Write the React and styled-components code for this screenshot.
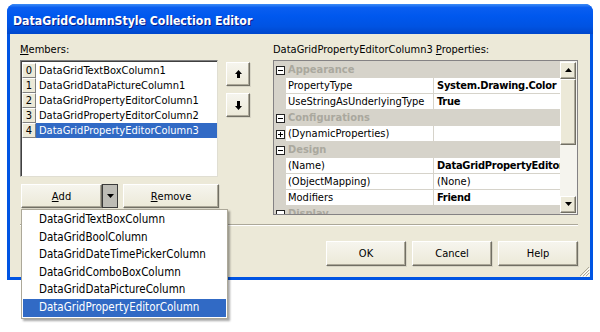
import React from "react";
import styled, { createGlobalStyle } from "styled-components";

const Global = createGlobalStyle`
  html, body { margin: 0; padding: 0; background: #ffffff; }
  body { font-family: "DejaVu Sans Condensed", "DejaVu Sans", sans-serif; font-size: 11px; color: #000; }
  * { box-sizing: border-box; }
`;

const Screen = styled.div`
  width: 600px;
  height: 332px;
  padding: 4px 0 0 7px;
  position: relative;
  overflow: hidden;
`;

const Window = styled.div`
  width: 586px;
  height: 276px;
  background: #0054e3;
  border-radius: 8px 8px 0 0;
  padding: 0 3px 3px 3px;
  display: flex;
  flex-direction: column;
  position: relative;
`;

const TitleBar = styled.div`
  height: 30px;
  margin: 0 -3px;
  border-radius: 8px 8px 0 0;
  background: linear-gradient(to bottom, #3d8cf5 0%, #0a5ef0 12%, #0058ee 40%, #0053e2 75%, #0047cc 100%);
  display: flex;
  align-items: center;
  padding: 3px 0 0 6px;
  color: #fff;
  font-family: "DejaVu Sans Condensed", "DejaVu Sans", sans-serif;
  font-weight: bold;
  font-size: 12.2px;
  text-shadow: 1px 1px 0 #0a1e8a;
`;

const Body = styled.div`
  flex: 1;
  background: #ece9d8;
  padding: 9px 12px 0 10px;
  display: flex;
  flex-direction: column;
  position: relative;
`;

const Top = styled.div`
  display: flex;
  gap: 23px;
`;

const LeftCol = styled.div`
  width: 230px;
  display: flex;
  flex-direction: column;
`;

const RightCol = styled.div`
  width: 305px;
  display: flex;
  flex-direction: column;
`;

const Label = styled.div`
  height: 14px;
  line-height: 14px;
  margin-bottom: 3px;
  u { text-decoration: underline; }
`;

const ListRow = styled.div`
  display: flex;
  gap: 8px;
`;

const ListBox = styled.div`
  width: 198px;
  height: 117px;
  background: #fff;
  border-top: 1px solid #7f7f7f;
  border-left: 1px solid #7f7f7f;
  border-right: 1px solid #e0ded2;
  border-bottom: 1px solid #e0ded2;
  box-shadow: inset 1px 1px 0 #404040;
  padding: 2px 0 0 1px;
`;

const Item = styled.div`
  display: flex;
  height: 15px;
  line-height: 15px;
`;

const IndexCell = styled.div`
  width: 14px;
  flex: none;
  background: #ece9d8;
  border-top: 1px solid #fff;
  border-left: 1px solid #fff;
  border-right: 1px solid #808080;
  border-bottom: 1px solid #808080;
  text-align: center;
  line-height: 13px;
`;

const ItemText = styled.div`
  flex: 1;
  padding-left: 3px;
  background: ${(p) => (p.$sel ? "#316ac5" : "transparent")};
  color: ${(p) => (p.$sel ? "#fff" : "#000")};
`;

const ArrowCol = styled.div`
  display: flex;
  flex-direction: column;
  gap: 7px;
  padding-top: 2px;
`;

const BevelButton = styled.button`
  font: inherit;
  color: #000;
  background: linear-gradient(to bottom, #f6f5ee, #ece9d8);
  border-top: 1px solid #fff;
  border-left: 1px solid #fff;
  border-right: 1px solid #716f64;
  border-bottom: 1px solid #716f64;
  box-shadow: inset -1px -1px 0 #aca899, 1px 1px 0 #d8d5c6;
  padding: 0;
  display: flex;
  align-items: center;
  justify-content: center;
  width: ${(p) => p.$w || 24}px;
  height: ${(p) => p.$h || 24}px;
  u { text-decoration: underline; }
`;

const ButtonsRow = styled.div`
  margin-top: 7px;
  display: flex;
  position: relative;
  padding-left: 1px;
`;

const SplitArrow = styled.div`
  width: 16px;
  height: 24px;
  background: #bdbcb5;
  border: 1px solid #3a3a3a;
  display: flex;
  align-items: center;
  justify-content: center;
  margin-right: 5px;
`;

const Menu = styled.div`
  position: absolute;
  left: 1px;
  top: 25px;
  width: 207px;
  background: #fff;
  border: 1px solid #aca899;
  padding: 1px;
  box-shadow: 2px 2px 2px rgba(0, 0, 0, 0.35);
  z-index: 5;
`;

const MenuItem = styled.div`
  height: 17.6px;
  line-height: 17.6px;
  padding-left: 16px;
  font-size: 11.5px;
  background: ${(p) => (p.$sel ? "#316ac5" : "transparent")};
  color: ${(p) => (p.$sel ? "#fff" : "#000")};
`;

const Grid = styled.div`
  width: 305px;
  height: 155px;
  border: 1px solid #848284;
  display: flex;
  background: #d6d3ca;
`;

const GridRows = styled.div`
  flex: 1;
  overflow: hidden;
  padding-top: 1px;
`;

const GRow = styled.div`
  display: flex;
  height: 16px;
  line-height: 15px;
`;

const Gutter = styled.div`
  width: 12px;
  flex: none;
  display: flex;
  align-items: center;
  justify-content: center;
  padding-left: 1px;
`;

const CatName = styled.div`
  flex: 1;
  padding-left: 2px;
  font-weight: bold;
  color: #aaa89e;
  border-bottom: 1px solid #d6d3ca;
`;

const PropName = styled.div`
  width: 148px;
  flex: none;
  background: #fff;
  padding-left: 2px;
  border-right: 1px solid #d6d3ca;
  border-bottom: 1px solid #d6d3ca;
  white-space: nowrap;
  overflow: hidden;
`;

const PropValue = styled.div`
  flex: 1;
  background: #fff;
  padding-left: 3px;
  font-weight: ${(p) => (p.$bold ? "bold" : "normal")};
  letter-spacing: ${(p) => (p.$bold ? "-0.25px" : "0")};
  border-bottom: 1px solid #d6d3ca;
  white-space: nowrap;
  overflow: hidden;
`;

const ScrollBar = styled.div`
  width: 17px;
  flex: none;
  display: flex;
  flex-direction: column;
  background: #f4f3ee;
  padding: 1px 1px 1px 0;
`;

const ScrollBtn = styled.div`
  height: ${(p) => p.$h}px;
  background: #ece9d8;
  border-top: 1px solid #fff;
  border-left: 1px solid #fff;
  border-right: 1px solid #716f64;
  border-bottom: 1px solid #716f64;
  box-shadow: inset -1px -1px 0 #aca899;
  display: flex;
  align-items: center;
  justify-content: center;
`;

const Track = styled.div`
  flex: 1;
  background-color: #f5f4ee;
  background-image: radial-gradient(#e2dfd2 0.6px, transparent 0.7px);
  background-size: 2px 2px;
`;

const Separator = styled.div`
  margin-top: 9px;
  height: 2px;
  border-top: 1px solid #aca899;
  border-bottom: 1px solid #fff;
`;

const Bottom = styled.div`
  display: flex;
  justify-content: flex-end;
  gap: 6px;
  margin-top: 15px;
`;

const Grip = styled.svg`
  position: absolute;
  right: 0;
  bottom: 0;
`;

const PlusBox = ({ minus }) => (
  <svg width="9" height="9" viewBox="0 0 9 9">
    <rect x="0.5" y="0.5" width="8" height="8" fill="#fff" stroke="#222" />
    <line x1="2" y1="4.5" x2="7" y2="4.5" stroke="#000" />
    {!minus && <line x1="4.5" y1="2" x2="4.5" y2="7" stroke="#000" />}
  </svg>
);

const Tri = ({ up, size = 7 }) => (
  <svg width={size} height={Math.ceil(size / 2) + 1} viewBox={`0 0 ${size} ${Math.ceil(size / 2) + 1}`}>
    {up ? (
      <polygon points={`0,${Math.ceil(size / 2)} ${size},${Math.ceil(size / 2)} ${size / 2},0`} fill="#000" />
    ) : (
      <polygon points={`0,0 ${size},0 ${size / 2},${Math.ceil(size / 2)}`} fill="#000" />
    )}
  </svg>
);

const ArrowIcon = ({ up }) => (
  <svg width="7" height="9" viewBox="0 0 7 9">
    {up ? (
      <>
        <polygon points="0,4 7,4 3.5,0" fill="#000" />
        <rect x="2" y="4" width="3" height="4" fill="#000" />
      </>
    ) : (
      <>
        <rect x="2" y="0" width="3" height="5" fill="#000" />
        <polygon points="0,5 7,5 3.5,9" fill="#000" />
      </>
    )}
  </svg>
);

const members = [
  "DataGridTextBoxColumn1",
  "DataGridDataPictureColumn1",
  "DataGridPropertyEditorColumn1",
  "DataGridPropertyEditorColumn2",
  "DataGridPropertyEditorColumn3",
];

const menuItems = [
  "DataGridTextBoxColumn",
  "DataGridBoolColumn",
  "DataGridDateTimePickerColumn",
  "DataGridComboBoxColumn",
  "DataGridDataPictureColumn",
  "DataGridPropertyEditorColumn",
];

const rows = [
  { cat: "Appearance" },
  { name: "PropertyType", value: "System.Drawing.Color", bold: true },
  { name: "UseStringAsUnderlyingType", value: "True", bold: true },
  { cat: "Configurations" },
  { name: "(DynamicProperties)", value: "", plus: true },
  { cat: "Design" },
  { name: "(Name)", value: "DataGridPropertyEditorColumn3", bold: true },
  { name: "(ObjectMapping)", value: "(None)" },
  { name: "Modifiers", value: "Friend", bold: true },
  { cat: "Display" },
];

export default function App() {
  return (
    <>
      <Global />
      <Screen>
        <Window>
          <TitleBar>DataGridColumnStyle Collection Editor</TitleBar>
          <Body>
            <Top>
              <LeftCol>
                <Label>
                  <u>M</u>embers:
                </Label>
                <ListRow>
                  <ListBox>
                    {members.map((m, i) => (
                      <Item key={m}>
                        <IndexCell>{i}</IndexCell>
                        <ItemText $sel={i === 4}>{m}</ItemText>
                      </Item>
                    ))}
                  </ListBox>
                  <ArrowCol>
                    <BevelButton>
                      <ArrowIcon up />
                    </BevelButton>
                    <BevelButton>
                      <ArrowIcon />
                    </BevelButton>
                  </ArrowCol>
                </ListRow>
                <ButtonsRow>
                  <BevelButton $w={81} $h={24}>
                    <u>A</u>dd
                  </BevelButton>
                  <SplitArrow>
                    <Tri />
                  </SplitArrow>
                  <BevelButton $w={96} $h={24}>
                    <u>R</u>emove
                  </BevelButton>
                  <Menu>
                    {menuItems.map((m, i) => (
                      <MenuItem key={m} $sel={i === 5}>
                        {m}
                      </MenuItem>
                    ))}
                  </Menu>
                </ButtonsRow>
              </LeftCol>
              <RightCol>
                <Label>
                  DataGridPropertyEditorColumn3 <u>P</u>roperties:
                </Label>
                <Grid>
                  <GridRows>
                    {rows.map((r, i) =>
                      r.cat ? (
                        <GRow key={i}>
                          <Gutter>
                            <PlusBox minus />
                          </Gutter>
                          <CatName>{r.cat}</CatName>
                        </GRow>
                      ) : (
                        <GRow key={i}>
                          <Gutter>{r.plus && <PlusBox />}</Gutter>
                          <PropName>{r.name}</PropName>
                          <PropValue $bold={r.bold}>{r.value}</PropValue>
                        </GRow>
                      )
                    )}
                  </GridRows>
                  <ScrollBar>
                    <ScrollBtn $h={17}>
                      <Tri up />
                    </ScrollBtn>
                    <ScrollBtn $h={66} />
                    <Track />
                    <ScrollBtn $h={17}>
                      <Tri />
                    </ScrollBtn>
                  </ScrollBar>
                </Grid>
              </RightCol>
            </Top>
            <Separator />
            <Bottom>
              <BevelButton $w={80} $h={25}>OK</BevelButton>
              <BevelButton $w={80} $h={25}>Cancel</BevelButton>
              <BevelButton $w={80} $h={25}>Help</BevelButton>
            </Bottom>
            <Grip width="12" height="12" viewBox="0 0 12 12">
              <line x1="11" y1="2" x2="2" y2="11" stroke="#aca899" />
              <line x1="11" y1="5" x2="5" y2="11" stroke="#aca899" />
              <line x1="11" y1="8" x2="8" y2="11" stroke="#aca899" />
              <line x1="12" y1="3" x2="3" y2="12" stroke="#fff" />
              <line x1="12" y1="6" x2="6" y2="12" stroke="#fff" />
              <line x1="12" y1="9" x2="9" y2="12" stroke="#fff" />
            </Grip>
          </Body>
        </Window>
      </Screen>
    </>
  );
}
